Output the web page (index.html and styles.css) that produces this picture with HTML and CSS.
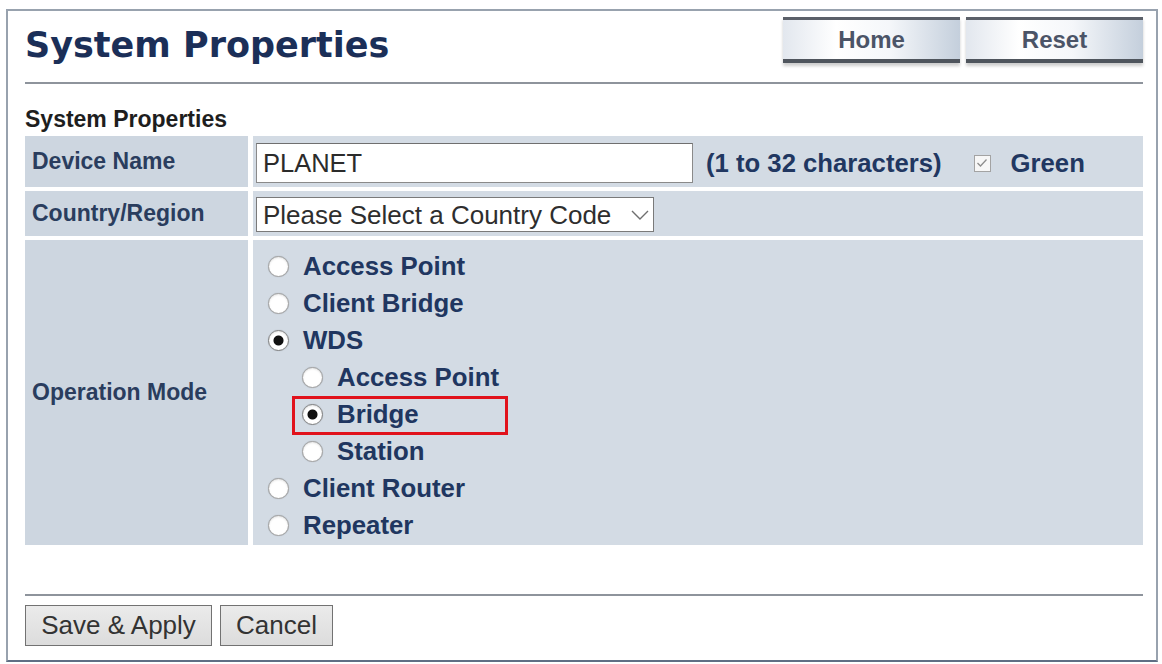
FILE: index.html
```html
<!DOCTYPE html>
<html lang="en">
<head>
  <meta charset="UTF-8">
  <meta name="viewport" content="width=device-width, initial-scale=1.0">
  <title>System Properties</title>
  <link rel="stylesheet" href="styles.css">
</head>
<body>
  <div class="frame">
    <div class="topbar">
      <h1 class="title">System Properties</h1>
      <div class="nav">
        <a class="nav-btn" href="#">Home</a>
        <a class="nav-btn" href="#">Reset</a>
      </div>
    </div>
    <div class="rule"></div>

    <form id="sysForm">
      <h2 class="section">System Properties</h2>
      <div class="props">
        <div class="label">Device Name</div>
        <div class="value name-row">
          <input type="text" class="field" name="devname" value="PLANET" maxlength="32">
          <span class="hint">(1 to 32 characters)</span>
          <label class="green">
            <span class="check">
              <svg width="12" height="10" viewBox="0 0 12 10"><path d="M1.5 5 L4.5 8 L10.5 1.5" fill="none" stroke="#8d8d8d" stroke-width="1.3"/></svg>
            </span>
            Green
          </label>
        </div>

        <div class="label">Country/Region</div>
        <div class="value country-row">
          <span class="select-wrap">
            <select class="select" name="country">
              <option>Please Select a Country Code</option>
            </select>
            <svg class="chevron" width="18" height="10" viewBox="0 0 18 10"><path d="M1 1 L9 9 L17 1" fill="none" stroke="#6f6f6f" stroke-width="1.4"/></svg>
          </span>
        </div>

        <div class="label">Operation Mode</div>
        <div class="value modes">
          <label class="mode"><input type="radio" name="opmode" class="radio"> Access Point</label>
          <label class="mode"><input type="radio" name="opmode" class="radio"> Client Bridge</label>
          <label class="mode"><input type="radio" name="opmode" class="radio" checked> WDS</label>
          <label class="mode sub"><input type="radio" name="wdsmode" class="radio"> Access Point</label>
          <label class="mode sub"><input type="radio" name="wdsmode" class="radio" checked> Bridge<span class="mark"></span></label>
          <label class="mode sub"><input type="radio" name="wdsmode" class="radio"> Station</label>
          <label class="mode"><input type="radio" name="opmode" class="radio"> Client Router</label>
          <label class="mode"><input type="radio" name="opmode" class="radio"> Repeater</label>
        </div>
      </div>

      <div class="rule bottom"></div>
      <div class="actions">
        <button type="submit" class="btn save">Save &amp; Apply</button>
        <button type="button" class="btn cancel">Cancel</button>
      </div>
    </form>
  </div>
</body>
</html>
```

FILE: styles.css
```css
* { margin: 0; padding: 0; box-sizing: border-box; }
body { background: #fff; font-family: "Liberation Sans", Arial, sans-serif; color: #213761; }

.frame { margin: 9px 0 0 6px; width: 1152px; height: 653px; border: 2px solid #98a2ae; border-bottom-color: #5f6e84; padding: 0 13px 0 17px; }

/* header with page title and nav buttons */
.topbar { display: flex; justify-content: space-between; align-items: flex-start; padding-top: 6px; height: 52px; }
.title { font-family: "DejaVu Sans", Verdana, sans-serif; font-weight: 700; font-size: 35px; line-height: 46px; margin-top: 5px; color: #1b2f58; }
.nav { display: flex; gap: 6px; }
.nav-btn { display: flex; align-items: center; justify-content: center; width: 177px; height: 46px; border-top: 3px solid #5b6069; border-bottom: 4px solid #4f555d; background: linear-gradient(90deg, #e2e7ee 0%, #fff 30%, #f5f7fa 60%, #c4cfdc 100%); box-shadow: 0 3px 3px rgba(0,0,0,0.2); font-weight: 700; font-size: 24px; color: #4b5467; text-decoration: none; padding-top: 1px; }

.rule { height: 2px; background: #8e949c; margin-top: 19px; }
.rule.bottom { margin-top: 49px; }

.section { font-size: 23px; line-height: 26px; font-weight: 700; color: #1e1e1e; margin: 22px 0 4px; }

/* property grid */
.props { display: grid; grid-template-columns: 223px 1fr; gap: 4px 5px; }
.label { background: #cdd6e0; display: flex; align-items: center; padding-left: 7px; font-size: 23px; font-weight: 700; color: #2a3d5e; }
.value { background: #d3dbe4; padding-left: 3px; }

.name-row { display: flex; align-items: center; padding-top: 7px; padding-bottom: 4px; height: 51px; }
.field { width: 437px; height: 40px; border: 1px solid #8a8a8a; border-top-color: #6f6f6f; background: #fff; padding-left: 6px; font-family: inherit; font-size: 25.5px; color: #2b2b2b; }
.hint { margin-left: 13px; font-size: 25.7px; font-weight: 700; }
.green { display: flex; align-items: center; margin-left: 32px; font-size: 25.7px; font-weight: 700; }
.check { display: inline-flex; align-items: center; justify-content: center; width: 17px; height: 17px; border: 1px solid #a3a3a3; background: #f7f7f7; margin-right: 20px; }

.country-row { padding-top: 6px; height: 45px; }
.select-wrap { position: relative; display: inline-block; }
.select { appearance: none; -webkit-appearance: none; width: 398px; height: 35px; border: 1px solid #7a7a7a; background: #fff; padding-left: 6px; font-family: inherit; font-size: 26px; color: #2e2e2e; }
.chevron { position: absolute; right: 5px; top: 13px; pointer-events: none; }

/* operation mode radios */
.modes { padding: 8px 0 1px; }
.mode { position: relative; display: flex; align-items: center; height: 37px; padding-left: 15px; font-size: 25.8px; font-weight: 700; color: #203660; }
.mode.sub { padding-left: 49px; }
.radio { appearance: none; -webkit-appearance: none; width: 21px; height: 21px; border-radius: 50%; border: 1.5px solid #a3a3a3; background: #fff; box-shadow: 0 0 1px rgba(0,0,0,0.25), inset 0 1px 2px rgba(0,0,0,0.1); margin-right: 14px; flex: none; }
.radio:checked { border-color: #808080; background: radial-gradient(circle, #111 0, #111 4.5px, #fff 5.5px); }
.mark { position: absolute; left: 39px; top: 0; width: 216px; height: 39px; border: 3px solid #e1121c; }

.actions { display: flex; gap: 8px; margin-top: 9px; }
.btn { height: 41px; border: 1px solid #727272; background: linear-gradient(#ebebeb, #dcdcdc); font-family: inherit; font-size: 26px; color: #333; cursor: pointer; }
.btn.save { width: 187px; }
.btn.cancel { width: 113px; }
```
